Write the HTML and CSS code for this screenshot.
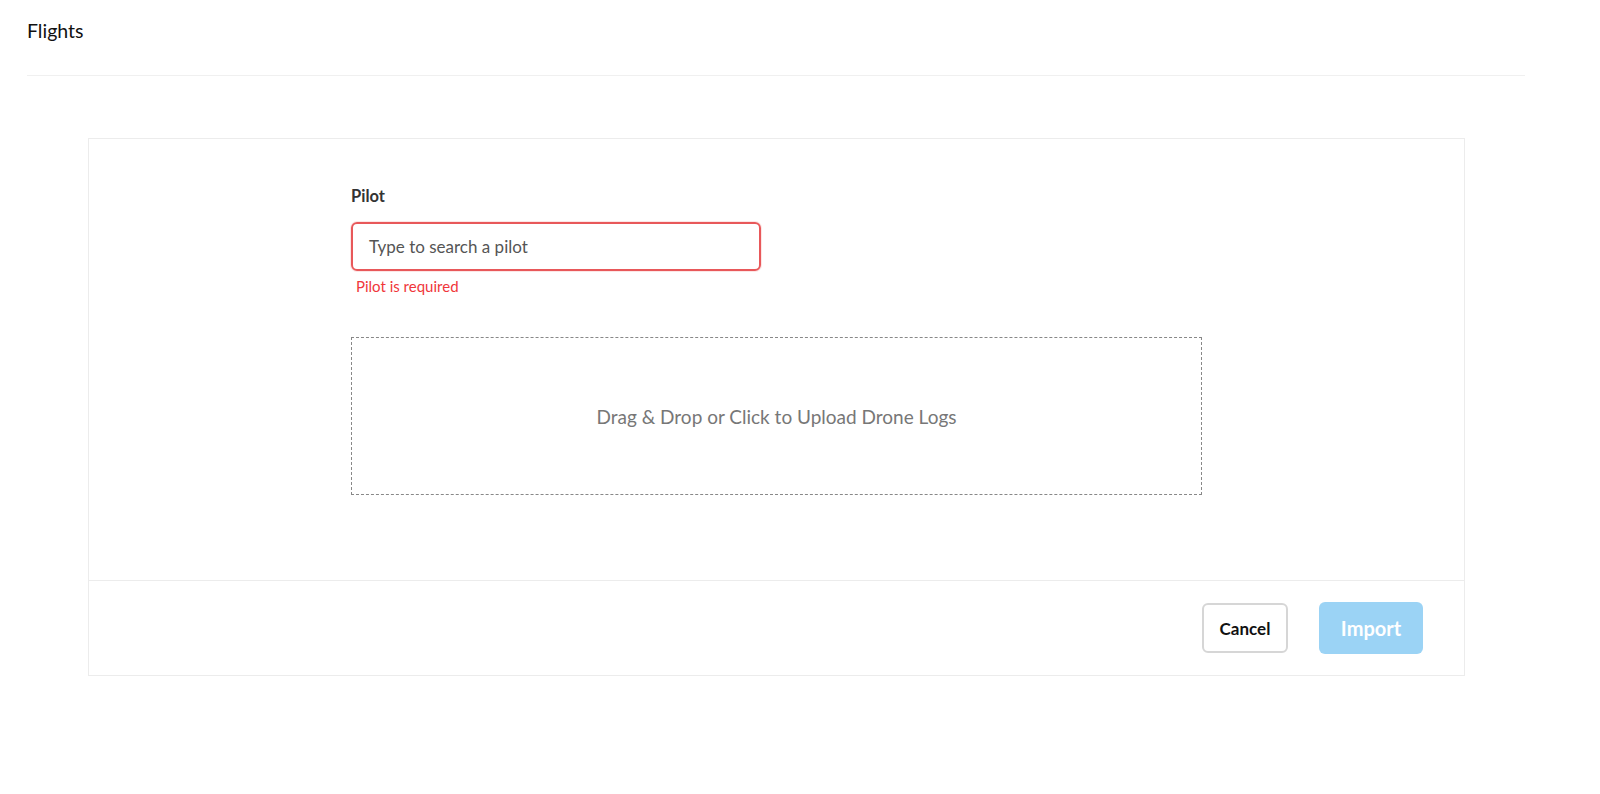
FILE: index.html
```html
<!DOCTYPE html>
<html>
<head>
<meta charset="utf-8">
<link rel="stylesheet" href="styles.css">
</head>
<body>
<div class="page">
  <header class="page-header">
    <h1 class="title">Flights</h1>
  </header>
  <section class="card">
    <div class="card-body">
      <div class="form">
        <label class="label">Pilot</label>
        <div class="input invalid">Type to search a pilot</div>
        <div class="error">Pilot is required</div>
        <div class="dropzone">Drag &amp; Drop or Click to Upload Drone Logs</div>
      </div>
    </div>
    <div class="card-footer">
      <button class="btn btn-cancel">Cancel</button>
      <button class="btn btn-import">Import</button>
    </div>
  </section>
</div>
</body>
</html>
```

FILE: styles.css
```css
* { box-sizing: border-box; }
html, body { margin: 0; padding: 0; background: #fff; }
body {
  font-family: Lato, "Open Sans", "Liberation Sans", sans-serif;
  color: #222;
}
.page {
  padding: 0 75px 0 27px;
}
.page-header {
  height: 76px;
  border-bottom: 1px solid #f0f0f0;
  display: flex;
  align-items: flex-start;
}
.title {
  margin: 20px 0 0 0;
  font-size: 19.5px;
  font-weight: 400;
  color: #111;
  line-height: 22px;
}
.card {
  margin: 62px 60px 0 61px;
  border: 1px solid #ececec;
  background: #fff;
}
.card-body {
  height: 441px;
  display: flex;
  justify-content: center;
  padding-top: 46px;
}
.form {
  width: 851px;
  display: flex;
  flex-direction: column;
  align-items: flex-start;
}
.label {
  font-size: 16.5px;
  font-weight: 700;
  color: #333;
  line-height: 22px;
}
.input {
  margin-top: 15px;
  width: 410px;
  height: 49px;
  border: 2px solid #e8585a;
  border-radius: 6px;
  padding: 0 16px;
  display: flex;
  align-items: center;
  font-size: 17px;
  color: #555;
  box-shadow: 0 0 0 1px rgba(232, 88, 90, 0.15);
}
.error {
  margin-top: 6px;
  margin-left: 5px;
  font-size: 15px;
  color: #f0363a;
  line-height: 18px;
}
.dropzone {
  margin-top: 42px;
  width: 851px;
  height: 158px;
  border: 1px dashed #888;
  display: flex;
  align-items: center;
  justify-content: center;
  font-size: 19px;
  color: #777;
}
.card-footer {
  border-top: 1px solid #ececec;
  height: 95px;
  display: flex;
  justify-content: flex-end;
  align-items: center;
  padding-right: 41px;
  gap: 31px;
}
.btn {
  font-family: inherit;
  font-weight: 700;
  border-radius: 6px;
  cursor: pointer;
}
.btn-cancel {
  width: 86px;
  height: 50px;
  background: #fff;
  border: 2px solid #d6d6d6;
  font-size: 17px;
  color: #111;
}
.btn-import {
  width: 104px;
  height: 52px;
  background: #9bd3f5;
  border: none;
  font-size: 20px;
  color: #fff;
}
```
